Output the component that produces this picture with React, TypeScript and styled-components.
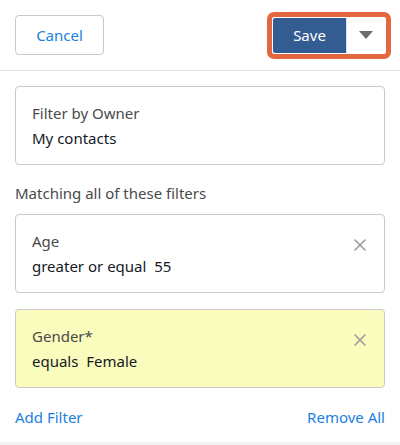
import * as React from 'react';
import styled, { createGlobalStyle } from 'styled-components';

const GlobalStyle = createGlobalStyle`
  html, body {
    margin: 0;
    padding: 0;
    background: #ffffff;
  }
  body {
    font-family: 'Noto Sans', 'Open Sans', sans-serif;
    color: #333333;
  }
`;

const Page = styled.div`
  width: 400px;
  height: 445px;
  display: flex;
  flex-direction: column;
  background: #ffffff;
  overflow: hidden;
`;

const Header = styled.div`
  height: 71px;
  box-sizing: border-box;
  padding: 0 9px 0 15px;
  display: flex;
  align-items: center;
  justify-content: space-between;
  border-bottom: 1px solid #e3e3e3;
`;

const CancelButton = styled.button`
  width: 89px;
  height: 40px;
  border: 1px solid #c9c9c9;
  border-radius: 4px;
  background: #ffffff;
  color: #1b7fe0;
  font-family: inherit;
  font-size: 15px;
  cursor: pointer;
`;

const FocusRing = styled.div`
  display: flex;
  padding: 1px;
  border: 5px solid #e3663e;
  border-radius: 7px;
`;

const SaveButton = styled.button`
  width: 73px;
  height: 35px;
  border: none;
  border-radius: 2px 0 0 2px;
  background: #335c93;
  color: #ffffff;
  font-family: inherit;
  font-size: 15px;
  cursor: pointer;
`;

const CaretButton = styled.button`
  width: 39px;
  height: 35px;
  border: none;
  border-left: 1px solid #d6e4f5;
  border-radius: 0 2px 2px 0;
  background: #ffffff;
  display: flex;
  align-items: center;
  justify-content: center;
  cursor: pointer;
`;

const Caret = styled.span`
  width: 0;
  height: 0;
  border-left: 7px solid transparent;
  border-right: 7px solid transparent;
  border-top: 8px solid #6b6b6b;
`;

const Body = styled.div`
  flex: 1;
  padding: 15px 15px 0;
  display: flex;
  flex-direction: column;
`;

const Card = styled.div<{ $highlight?: boolean }>`
  position: relative;
  height: 79px;
  box-sizing: border-box;
  padding: 16px 16px 0;
  border: 1px solid #c9c9c9;
  border-radius: 4px;
  background: ${(p) => (p.$highlight ? '#f9fcbc' : '#ffffff')};
  display: flex;
  flex-direction: column;
  gap: 4px;
`;

const Label = styled.div`
  font-size: 15px;
  line-height: 21px;
  color: #4a4a4a;
`;

const Value = styled.div`
  font-size: 15px;
  line-height: 21px;
  color: #16191f;
  white-space: pre;
`;

const Remove = styled.button`
  position: absolute;
  top: 22px;
  right: 16px;
  width: 16px;
  height: 16px;
  padding: 0;
  border: none;
  background: transparent;
  cursor: pointer;
`;

const SectionTitle = styled.div`
  margin: 18px 0 10px;
  font-size: 15px;
  line-height: 21px;
  color: #4a4a4a;
`;

const FilterList = styled.div`
  display: flex;
  flex-direction: column;
  gap: 16px;
`;

const Footer = styled.div`
  margin-top: 19px;
  display: flex;
  justify-content: space-between;
`;

const Link = styled.a`
  font-size: 15px;
  line-height: 21px;
  color: #1b7fe0;
  cursor: pointer;
`;

const Bottom = styled.div`
  height: 3px;
  background: #f3f3f3;
`;

const CloseIcon = () => (
  <svg width="16" height="16" viewBox="0 0 16 16">
    <path d="M3 3 L13 13 M13 3 L3 13" stroke="#9a9a9a" strokeWidth="1.6" strokeLinecap="round" />
  </svg>
);

type Filter = { label: string; value: string; highlight?: boolean };

const filters: Filter[] = [
  { label: 'Age', value: 'greater or equal  55' },
  { label: 'Gender*', value: 'equals  Female', highlight: true },
];

export default function App() {
  return (
    <Page>
      <GlobalStyle />
      <Header>
        <CancelButton>Cancel</CancelButton>
        <FocusRing>
          <SaveButton>Save</SaveButton>
          <CaretButton>
            <Caret />
          </CaretButton>
        </FocusRing>
      </Header>
      <Body>
        <Card>
          <Label>Filter by Owner</Label>
          <Value>My contacts</Value>
        </Card>
        <SectionTitle>Matching all of these filters</SectionTitle>
        <FilterList>
          {filters.map((f) => (
            <Card key={f.label} $highlight={f.highlight}>
              <Label>{f.label}</Label>
              <Value>{f.value}</Value>
              <Remove>
                <CloseIcon />
              </Remove>
            </Card>
          ))}
        </FilterList>
        <Footer>
          <Link>Add Filter</Link>
          <Link>Remove All</Link>
        </Footer>
      </Body>
      <Bottom />
    </Page>
  );
}
